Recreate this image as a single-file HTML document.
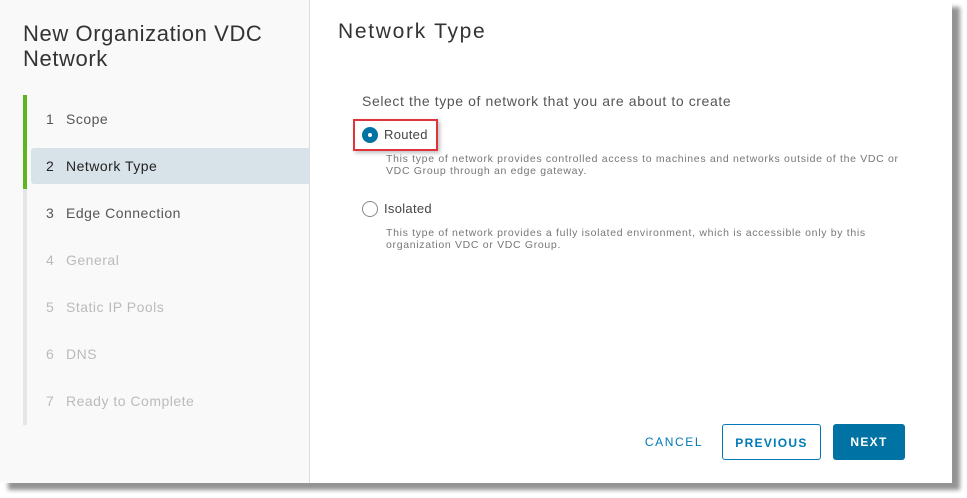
<!DOCTYPE html>
<html><head><meta charset="utf-8"><style>
*{margin:0;padding:0;box-sizing:border-box}
body{width:967px;height:498px;background:#fff;font-family:"Liberation Sans",sans-serif;position:relative;overflow:hidden}
.shadow{position:absolute;left:8px;top:7px;width:952px;height:483px;background:#666;filter:blur(2px);opacity:.7}
.page{position:absolute;left:0;top:0;width:952px;height:483px;background:#fff}
.left{position:absolute;left:0;top:0;width:310px;height:483px;background:#f9f9f9;border-right:1px solid #ddd}
.t{position:absolute;left:23px;top:21px;font-size:22px;line-height:25px;color:#333;letter-spacing:.6px}
.track{position:absolute;left:23px;top:95px;width:4px;height:330px;background:#e6e6e6}
.green{position:absolute;left:23px;top:95px;width:4px;height:94px;background:#5fb520}
.step{position:absolute;left:31px;width:279px;height:36px;line-height:36px;font-size:14px;color:#565656;padding-left:15px;letter-spacing:.5px}
.step span{display:inline-block;width:20px}
.step.dis{color:#bbb}
.step.act{background:#d8e3e9;color:#222;border-radius:3px 0 0 3px}
h2{position:absolute;left:338px;top:20px;font-size:21px;font-weight:normal;color:#333;letter-spacing:1.7px}
.sub{position:absolute;left:362px;top:93px;font-size:14px;color:#555;letter-spacing:.6px}
.radio{position:absolute;width:16px;height:16px;border-radius:50%}
.lbl{position:absolute;font-size:13px;color:#444;letter-spacing:.3px}
.desc{position:absolute;left:386px;font-size:10.5px;color:#777;line-height:12px;letter-spacing:.68px}
.btn{position:absolute;top:424px;height:36px;line-height:36px;font-size:12px;font-weight:bold;letter-spacing:1.3px;text-align:center;border-radius:3px}
</style></head><body>
<div class="shadow"></div>
<div class="page">
<div class="left">
<div class="t">New Organization VDC<br>Network</div>
<div class="track"></div><div class="green"></div>
<div class="step" style="top:101px"><span>1</span>Scope</div>
<div class="step act" style="top:148px"><span>2</span>Network Type</div>
<div class="step" style="top:195px"><span>3</span>Edge Connection</div>
<div class="step dis" style="top:242px"><span>4</span>General</div>
<div class="step dis" style="top:289px"><span>5</span>Static IP Pools</div>
<div class="step dis" style="top:336px"><span>6</span>DNS</div>
<div class="step dis" style="top:383px"><span>7</span>Ready to Complete</div>
</div>
<h2>Network Type</h2>
<div class="sub">Select the type of network that you are about to create</div>
<div style="position:absolute;left:353px;top:119px;width:85px;height:32px;border:2px solid #e0343c;box-shadow:2px 2px 4px rgba(0,0,0,.25)"></div>
<div class="radio" style="left:362px;top:127px;background:#0072a3"><div style="position:absolute;left:6px;top:6px;width:4px;height:4px;border-radius:50%;background:#fff"></div></div>
<div class="lbl" style="left:384px;top:127px">Routed</div>
<div class="desc" style="top:153px">This type of network provides controlled access to machines and networks outside of the VDC or<br>VDC Group through an edge gateway.</div>
<div class="radio" style="left:362px;top:201px;border:1px solid #888;background:#fff"></div>
<div class="lbl" style="left:384px;top:201px">Isolated</div>
<div class="desc" style="top:227px">This type of network provides a fully isolated environment, which is accessible only by this<br>organization VDC or VDC Group.</div>
<div class="btn" style="left:636px;width:76px;color:#0079b8;font-weight:normal;letter-spacing:1.6px">CANCEL</div>
<div class="btn" style="left:722px;width:99px;border:1px solid #0079b8;color:#0079b8">PREVIOUS</div>
<div class="btn" style="left:833px;width:72px;background:#0072a3;color:#fff">NEXT</div>
</div>
</body></html>
